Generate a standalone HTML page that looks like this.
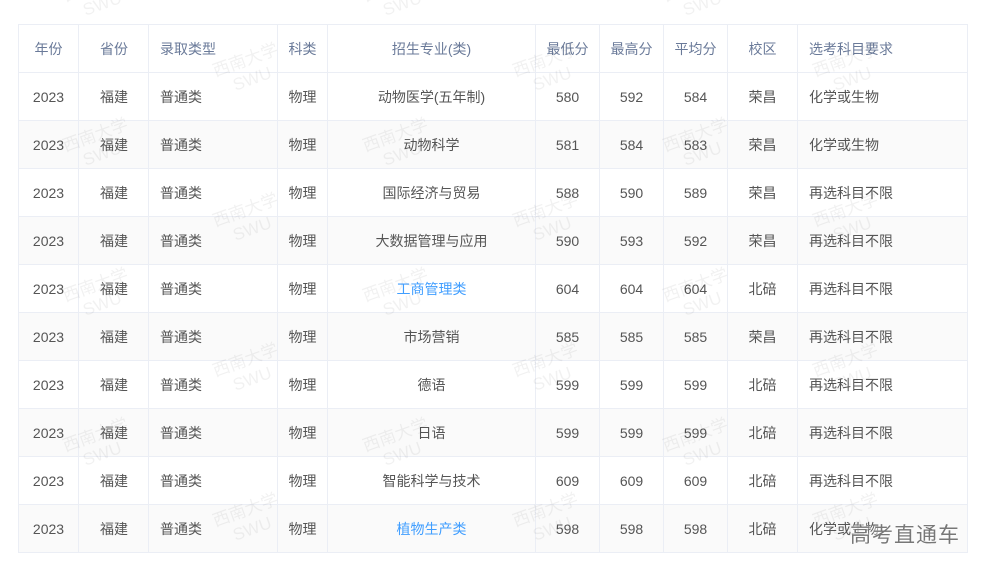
<!DOCTYPE html>
<html><head><meta charset="utf-8"><style>
html,body{margin:0;width:986px;height:571px;background:#fff;position:relative;overflow:hidden;font-family:"Liberation Sans","Noto Sans CJK SC",sans-serif;}
table{position:absolute;left:18px;top:24px;border-collapse:collapse;font-size:14px;color:#555;}
td,th{border:1px solid #ebeef5;height:47px;padding:0;text-align:center;font-weight:normal;}
th{color:#6a7a99;}
.l{text-align:left;padding-left:11px;}
.l2{text-align:left;padding-left:21px;}
tr.e td{background:#fafafa;}
a{color:#409eff;text-decoration:none;}
.wm{position:absolute;color:rgba(0,0,0,0.055);font-size:17px;transform:rotate(-20deg);line-height:20px;text-align:center;pointer-events:none;z-index:2}
.gk{position:absolute;left:850px;top:519px;font-size:21px;color:#777;z-index:3;text-shadow:0 0 2px #fff,0 0 2px #fff;letter-spacing:1px;}
</style></head><body>
<table>
<colgroup><col style="width:60px"><col style="width:70px"><col style="width:129px"><col style="width:50px"><col style="width:208px"><col style="width:64px"><col style="width:64px"><col style="width:64px"><col style="width:70px"><col style="width:170px"></colgroup>
<tr><th>年份</th><th class="l2">省份</th><th class="l">录取类型</th><th>科类</th><th>招生专业(类)</th><th>最低分</th><th>最高分</th><th>平均分</th><th>校区</th><th class="l">选考科目要求</th></tr>
<tr><td>2023</td><td class="l2">福建</td><td class="l">普通类</td><td>物理</td><td>动物医学(五年制)</td><td>580</td><td>592</td><td>584</td><td>荣昌</td><td class="l">化学或生物</td></tr>
<tr class="e"><td>2023</td><td class="l2">福建</td><td class="l">普通类</td><td>物理</td><td>动物科学</td><td>581</td><td>584</td><td>583</td><td>荣昌</td><td class="l">化学或生物</td></tr>
<tr><td>2023</td><td class="l2">福建</td><td class="l">普通类</td><td>物理</td><td>国际经济与贸易</td><td>588</td><td>590</td><td>589</td><td>荣昌</td><td class="l">再选科目不限</td></tr>
<tr class="e"><td>2023</td><td class="l2">福建</td><td class="l">普通类</td><td>物理</td><td>大数据管理与应用</td><td>590</td><td>593</td><td>592</td><td>荣昌</td><td class="l">再选科目不限</td></tr>
<tr><td>2023</td><td class="l2">福建</td><td class="l">普通类</td><td>物理</td><td><a>工商管理类</a></td><td>604</td><td>604</td><td>604</td><td>北碚</td><td class="l">再选科目不限</td></tr>
<tr class="e"><td>2023</td><td class="l2">福建</td><td class="l">普通类</td><td>物理</td><td>市场营销</td><td>585</td><td>585</td><td>585</td><td>荣昌</td><td class="l">再选科目不限</td></tr>
<tr><td>2023</td><td class="l2">福建</td><td class="l">普通类</td><td>物理</td><td>德语</td><td>599</td><td>599</td><td>599</td><td>北碚</td><td class="l">再选科目不限</td></tr>
<tr class="e"><td>2023</td><td class="l2">福建</td><td class="l">普通类</td><td>物理</td><td>日语</td><td>599</td><td>599</td><td>599</td><td>北碚</td><td class="l">再选科目不限</td></tr>
<tr><td>2023</td><td class="l2">福建</td><td class="l">普通类</td><td>物理</td><td>智能科学与技术</td><td>609</td><td>609</td><td>609</td><td>北碚</td><td class="l">再选科目不限</td></tr>
<tr class="e"><td>2023</td><td class="l2">福建</td><td class="l">普通类</td><td>物理</td><td><a>植物生产类</a></td><td>598</td><td>598</td><td>598</td><td>北碚</td><td class="l">化学或生物</td></tr>
</table>
<div id="wms"></div>
<script>
var h='';
for(var i=0;i<8;i++){var y=-25+i*75;for(var x=(i%2?215:65);x<940;x+=300){h+='<div class="wm" style="left:'+x+'px;top:'+y+'px">西南大学<br>SWU</div>';}}
document.getElementById('wms').innerHTML=h;
</script>
<div class="gk">高考直通车</div>
</body></html>
